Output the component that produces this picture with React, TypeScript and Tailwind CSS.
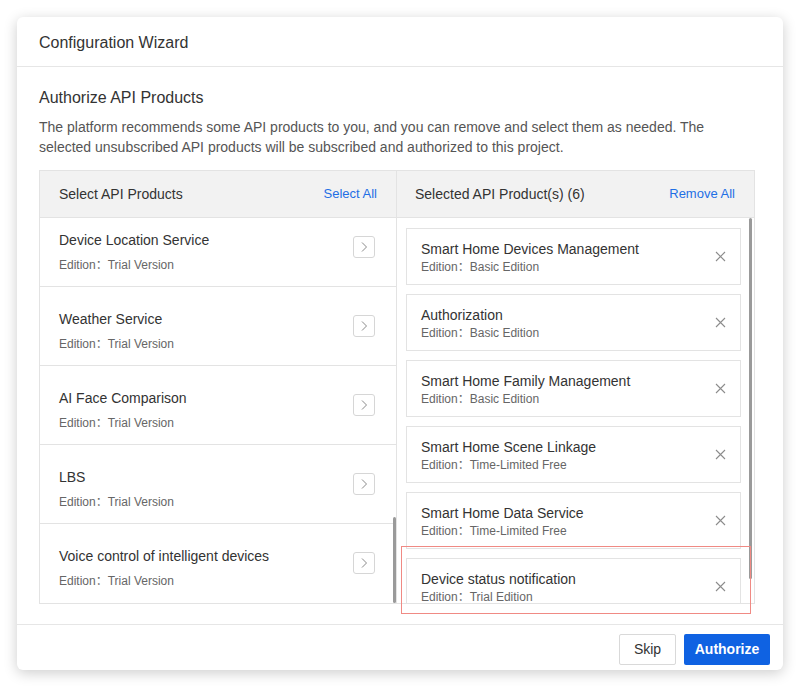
import React from 'react';

const leftItems = [
  { name: 'Device Location Service', edition: 'Trial Version' },
  { name: 'Weather Service', edition: 'Trial Version' },
  { name: 'AI Face Comparison', edition: 'Trial Version' },
  { name: 'LBS', edition: 'Trial Version' },
  { name: 'Voice control of intelligent devices', edition: 'Trial Version' },
];

const rightItems = [
  { name: 'Smart Home Devices Management', edition: 'Basic Edition' },
  { name: 'Authorization', edition: 'Basic Edition' },
  { name: 'Smart Home Family Management', edition: 'Basic Edition' },
  { name: 'Smart Home Scene Linkage', edition: 'Time-Limited Free' },
  { name: 'Smart Home Data Service', edition: 'Time-Limited Free' },
  { name: 'Device status notification', edition: 'Trial Edition' },
];

const ChevronBtn = () => (
  <button className="mt-[28px] flex h-[22px] w-[22px] items-center justify-center rounded-[3px] border border-[#d6d6d6] bg-white">
    <svg width="10" height="12" viewBox="0 0 10 12" fill="none">
      <path d="M3 1.5 L7.5 6 L3 10.5" stroke="#8a8a8a" strokeWidth="1" />
    </svg>
  </button>
);

const CloseIcon = () => (
  <svg width="11" height="11" viewBox="0 0 11 11" fill="none">
    <path d="M1 1 L10 10 M10 1 L1 10" stroke="#8c8c8c" strokeWidth="1.1" />
  </svg>
);

export default function App() {
  return (
    <div
      className="min-h-[689px] bg-white pt-[17px] pl-[17px] text-[#333]"
      style={{ fontFamily: '"Liberation Sans", "Noto Sans CJK SC", sans-serif' }}
    >
      <div className="flex h-[653px] w-[766px] flex-col rounded-[6px] bg-white shadow-[0_3px_14px_rgba(0,0,0,0.2)]">
        {/* header */}
        <div className="flex h-[50px] items-center border-b border-[#e6e6e6] px-[22px] pt-[2px] text-[16px]">
          Configuration Wizard
        </div>

        {/* body */}
        <div className="flex-1 px-[22px] pt-[20px]">
          <h3 className="text-[16px] leading-[22px]">Authorize API Products</h3>
          <p className="mt-[8px] max-w-[700px] text-[14px] leading-[20px] text-[#555]">
            The platform recommends some API products to you, and you can remove and select them as needed. The
            selected unsubscribed API products will be subscribed and authorized to this project.
          </p>

          <div className="relative mt-[13px] flex h-[434px] w-[716px] border border-[#e3e3e3]">
            {/* left panel */}
            <div className="flex w-[357px] flex-col border-r border-[#e3e3e3]">
              <div className="flex h-[47px] shrink-0 items-center justify-between border-b border-[#e3e3e3] bg-[#f2f2f2] pl-[19px] pr-[19px]">
                <span className="text-[14px]">Select API Products</span>
                <span className="text-[13px] text-[#1f6fe5]">Select All</span>
              </div>
              <div className="relative flex-1 overflow-hidden">
                {/* list is scrolled to the bottom */}
                <div className="-mt-[10px]">
                  {leftItems.map((it, i) => (
                    <div
                      key={it.name}
                      className={`flex h-[79px] items-start justify-between pl-[19px] pr-[21px] ${i < leftItems.length - 1 ? 'border-b border-[#e3e3e3]' : ''}`}
                    >
                      <div className="pt-[22px]">
                        <div className="text-[14px] leading-[20px]">{it.name}</div>
                        <div className="mt-[7px] text-[12px] leading-[16px] text-[#666]">Edition：{it.edition}</div>
                      </div>
                      <ChevronBtn />
                    </div>
                  ))}
                </div>
                <div className="absolute right-0 bottom-0 h-[86px] w-[3px] rounded-full bg-[#9a9a9a]" />
              </div>
            </div>

            {/* right panel */}
            <div className="flex flex-1 flex-col">
              <div className="flex h-[47px] shrink-0 items-center justify-between border-b border-[#e3e3e3] bg-[#f2f2f2] pl-[18px] pr-[19px]">
                <span className="text-[14px]">Selected API Product(s) (6)</span>
                <span className="text-[13px] text-[#1f6fe5]">Remove All</span>
              </div>
              <div className="relative flex-1 overflow-hidden">
                <div className="flex flex-col gap-[9px] pt-[10px] pl-[9px] pr-[13px]">
                  {rightItems.map((it) => (
                    <div
                      key={it.name}
                      className="flex h-[57px] shrink-0 items-center justify-between border border-[#e3e3e3] pl-[14px] pr-[14px]"
                    >
                      <div>
                        <div className="text-[14px] leading-[20px]">{it.name}</div>
                        <div className="text-[12px] leading-[16px] text-[#666]">Edition：{it.edition}</div>
                      </div>
                      <CloseIcon />
                    </div>
                  ))}
                </div>
                <div className="absolute top-0 right-[2px] h-[361px] w-[3px] rounded-full bg-[#9a9a9a]" />
              </div>
            </div>

            {/* highlight */}
            <div className="pointer-events-none absolute left-[361px] top-[375px] h-[68px] w-[350px] border border-[#f08a84]" />
          </div>
        </div>

        {/* footer */}
        <div className="mt-[20px] flex h-[46px] items-center justify-end gap-[8px] border-t border-[#e6e6e6] pt-[3px] pr-[13px]">
          <button className="h-[31px] w-[57px] rounded-[2px] border border-[#d9d9d9] bg-white text-[14px] text-[#333]">
            Skip
          </button>
          <button className="h-[31px] w-[86px] rounded-[2px] bg-[#0f62e2] text-[14px] font-bold text-white">
            Authorize
          </button>
        </div>
      </div>
    </div>
  );
}
